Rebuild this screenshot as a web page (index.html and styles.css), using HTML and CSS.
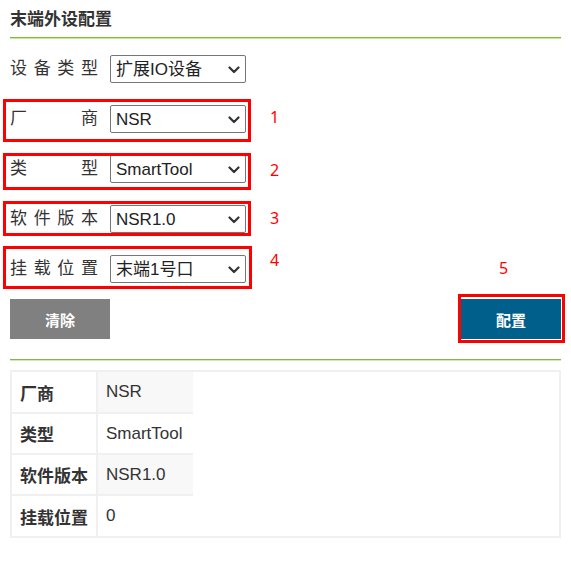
FILE: index.html
```html
<!DOCTYPE html>
<html lang="zh-CN">
<head>
<meta charset="utf-8">
<title>末端外设配置</title>
<link rel="stylesheet" href="styles.css">
</head>
<body>
<div class="page">
  <h3 class="title">末端外设配置</h3>
  <div class="rule"></div>
  <form class="form">
    <div class="row">
      <label class="lbl">设备类型</label>
      <div class="sel"><select><option>扩展IO设备</option></select><svg class="chev" width="12" height="8" viewBox="0 0 12 8"><path d="M1.5 1.5 L6 6 L10.5 1.5" fill="none" stroke="#333" stroke-width="2.2" stroke-linecap="round" stroke-linejoin="round"/></svg></div>
    </div>
    <div class="row">
      <label class="lbl">厂商</label>
      <div class="sel"><select><option>NSR</option></select><svg class="chev" width="12" height="8" viewBox="0 0 12 8"><path d="M1.5 1.5 L6 6 L10.5 1.5" fill="none" stroke="#333" stroke-width="2.2" stroke-linecap="round" stroke-linejoin="round"/></svg></div>
    </div>
    <div class="row">
      <label class="lbl">类型</label>
      <div class="sel"><select><option>SmartTool</option></select><svg class="chev" width="12" height="8" viewBox="0 0 12 8"><path d="M1.5 1.5 L6 6 L10.5 1.5" fill="none" stroke="#333" stroke-width="2.2" stroke-linecap="round" stroke-linejoin="round"/></svg></div>
    </div>
    <div class="row">
      <label class="lbl">软件版本</label>
      <div class="sel"><select><option>NSR1.0</option></select><svg class="chev" width="12" height="8" viewBox="0 0 12 8"><path d="M1.5 1.5 L6 6 L10.5 1.5" fill="none" stroke="#333" stroke-width="2.2" stroke-linecap="round" stroke-linejoin="round"/></svg></div>
    </div>
    <div class="row">
      <label class="lbl">挂载位置</label>
      <div class="sel"><select><option>末端1号口</option></select><svg class="chev" width="12" height="8" viewBox="0 0 12 8"><path d="M1.5 1.5 L6 6 L10.5 1.5" fill="none" stroke="#333" stroke-width="2.2" stroke-linecap="round" stroke-linejoin="round"/></svg></div>
    </div>
    <div class="actions">
      <button type="button" class="btn btn-gray">清除</button>
      <button type="button" class="btn btn-blue">配置</button>
    </div>
  </form>
  <div class="rule rule-low"></div>
  <div class="info">
    <table>
      <tr><th>厂商</th><td class="alt">NSR</td></tr>
      <tr><th>类型</th><td>SmartTool</td></tr>
      <tr><th>软件版本</th><td class="alt">NSR1.0</td></tr>
      <tr><th>挂载位置</th><td>0</td></tr>
    </table>
  </div>

  <div class="mark mark-1"></div>
  <div class="mark mark-2"></div>
  <div class="mark mark-3"></div>
  <div class="mark mark-4"></div>
  <div class="mark mark-5"></div>
  <span class="num num-1">1</span>
  <span class="num num-2">2</span>
  <span class="num num-3">3</span>
  <span class="num num-4">4</span>
  <span class="num num-5">5</span>
</div>
</body>
</html>
```

FILE: styles.css
```css
* { box-sizing: border-box; }
html, body { margin: 0; padding: 0; background: #fff; }
body {
  font-family: "Liberation Sans", Arial, "Noto Sans CJK SC", sans-serif;
  color: #333;
}
.page {
  position: relative;
  padding: 0 10px;
}
.title {
  margin: 0;
  padding: 8px 0 5px;
  line-height: 24px;
  font-size: 17px;
  font-weight: bold;
  color: #333;
}
.rule {
  height: 1px;
  background: #7fbf2a;
  box-shadow: 0 1px 0 #c9e4a4;
}
.rule-low {
  margin-top: 20px;
  background: #86b64a;
  box-shadow: 0 1px 0 #d2e6b6;
}
.form {
  margin: 0;
  padding-top: 17px;
}
.row {
  display: flex;
  align-items: center;
  height: 28px;
  margin-bottom: 22px;
}
.lbl {
  width: 88px;
  margin-right: 12px;
  font-size: 17px;
  line-height: 24px;
  color: #333;
  text-align: justify;
  text-align-last: justify;
}
.sel {
  position: relative;
  width: 136px;
  height: 28px;
}
.sel select {
  -webkit-appearance: none;
  appearance: none;
  width: 100%;
  height: 100%;
  margin: 0;
  padding: 0 0 0 5px;
  border: 1px solid #767676;
  border-radius: 2px;
  background: #fff;
  font-family: "Liberation Sans", Arial, "Noto Sans CJK SC", sans-serif;
  font-size: 17px;
  color: #222;
}
.chev {
  position: absolute;
  right: 6px;
  top: 11px;
  pointer-events: none;
}
.actions {
  display: flex;
  justify-content: space-between;
  margin-top: -6px;
}
.btn {
  width: 100px;
  height: 40px;
  border: 0;
  padding: 0;
  color: #fff;
  font-family: "Liberation Sans", "Noto Sans CJK SC", sans-serif;
  font-size: 15px;
  font-weight: bold;
}
.btn-gray { background: #808080; }
.btn-blue { background: #015f8c; }
.info {
  margin-top: 10px;
  border: 2px solid #f0f0f0;
}
.info table {
  border-collapse: collapse;
  border-style: hidden;
}
.info th, .info td {
  height: 41px;
  padding: 0 8px;
  border: 2px solid #f0f0f0;
  font-size: 17px;
  text-align: left;
  color: #333;
  white-space: nowrap;
}
.info th { font-weight: bold; background: #fff; }
.info td { font-weight: normal; background: #fff; padding-right: 10px; }
.info td.alt { background: #f8f8f8; }

.mark {
  position: absolute;
  border: 3px solid #f00;
}
.mark-1 { left: 3px; top: 99px; width: 248px; height: 43px; }
.mark-2 { left: 3px; top: 153px; width: 248px; height: 37px; }
.mark-3 { left: 3px; top: 201px; width: 248px; height: 35px; }
.mark-4 { left: 3px; top: 246px; width: 249px; height: 43px; }
.mark-5 { left: 458px; top: 294px; width: 107px; height: 49px; }
.num {
  position: absolute;
  font-family: "Noto Sans", "Liberation Sans", sans-serif;
  font-size: 16px;
  line-height: 16px;
  color: #f00;
}
.num-1 { left: 270px; top: 109px; }
.num-2 { left: 270px; top: 162px; }
.num-3 { left: 270px; top: 210px; }
.num-4 { left: 270px; top: 252px; }
.num-5 { left: 499px; top: 260px; }
```
